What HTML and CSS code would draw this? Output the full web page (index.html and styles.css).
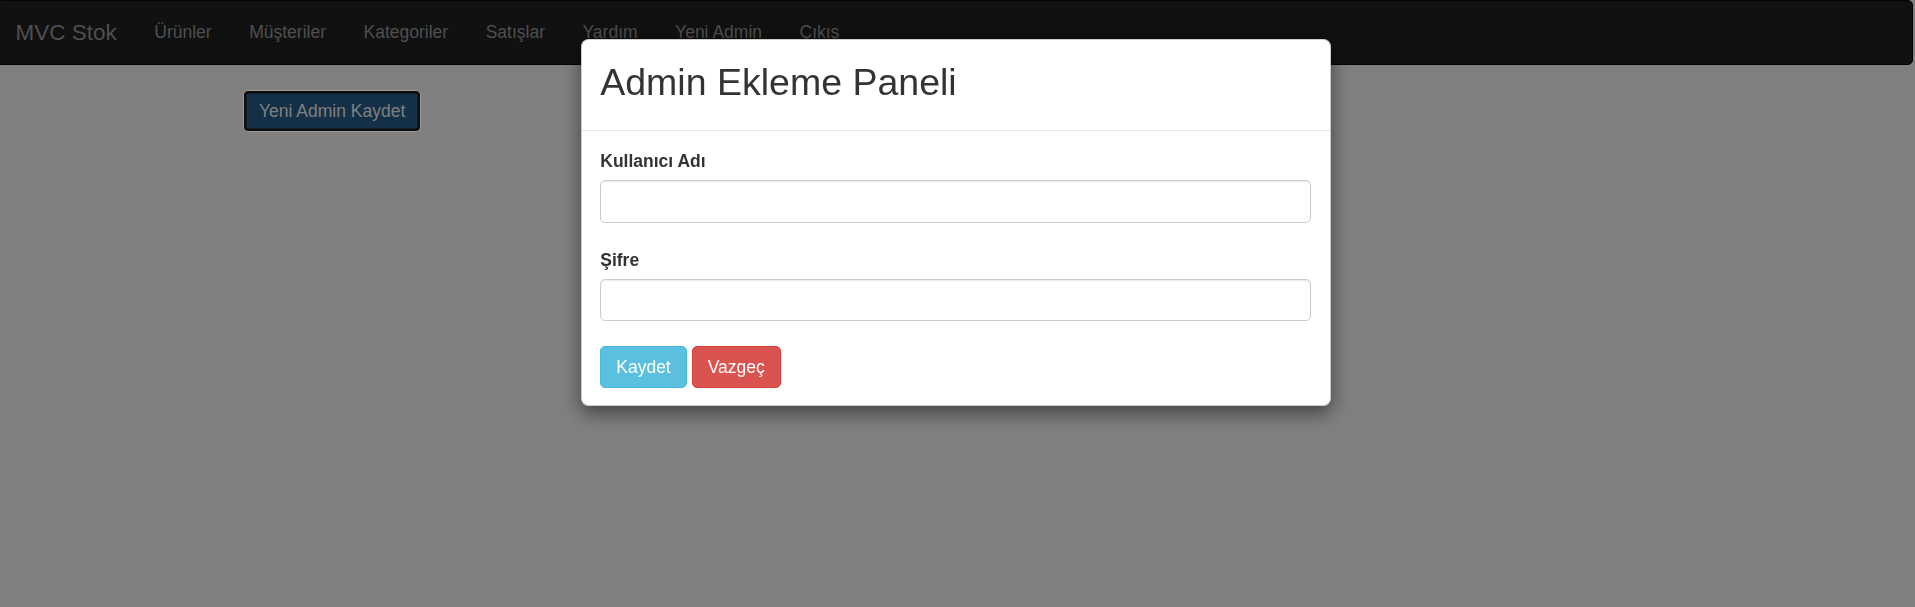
FILE: index.html
```html
<!DOCTYPE html>
<html lang="tr">
<head>
<meta charset="utf-8">
<title>Admin Ekleme</title>
<link rel="stylesheet" href="styles.css">
</head>
<body>
<nav class="navbar">
  <a class="brand" href="#">MVC Stok</a>
  <ul class="nav">
    <li><a href="#">Ürünler</a></li>
    <li><a href="#">Müşteriler</a></li>
    <li><a href="#">Kategoriler</a></li>
    <li><a href="#">Satışlar</a></li>
    <li><a href="#">Yardım</a></li>
    <li><a href="#">Yeni Admin</a></li>
    <li><a href="#">Çıkış</a></li>
  </ul>
</nav>
<main class="container">
  <button class="btn btn-primary is-focused" type="button">Yeni Admin Kaydet</button>
</main>
<div class="modal">
  <div class="modal-dialog">
    <div class="modal-content">
      <div class="modal-header">
        <h2 class="modal-title">Admin Ekleme Paneli</h2>
      </div>
      <div class="modal-body">
        <form class="admin-form">
          <div class="form-group">
            <label for="kadi">Kullanıcı Adı</label>
            <input id="kadi" class="form-control" type="text">
          </div>
          <div class="form-group">
            <label for="sifre">Şifre</label>
            <input id="sifre" class="form-control" type="password">
          </div>
          <div class="actions">
            <button class="btn btn-info" type="button">Kaydet</button>
            <button class="btn btn-danger" type="button">Vazgeç</button>
          </div>
        </form>
      </div>
    </div>
  </div>
</div>
</body>
</html>
```
FILE: styles.css
```css
* {
  box-sizing: border-box;
}

body {
  margin: 0;
  padding-right: 4px;
  background: #808080;
  font-family: "Liberation Sans", Arial, sans-serif;
  font-size: 17.5px;
  line-height: 25px;
  color: #333;
}

.navbar {
  display: flex;
  align-items: center;
  height: 65px;
  margin: 0 -2px 25px -4px;
  background: #111;
  border: 1.25px solid #040404;
  border-radius: 5px;
}

.brand {
  padding: 0 18.75px 0 18.5px;
  font-size: 22.5px;
  line-height: 25px;
  color: #4f4f4f;
  text-decoration: none;
}

.nav {
  display: flex;
  margin: 0;
  padding: 0;
  list-style: none;
}

.nav a {
  display: block;
  padding: 0 18.75px;
  color: #4f4f4f;
  text-decoration: none;
}

.container {
  width: 1462.5px;
  margin: 0 auto;
  padding: 0 18.75px;
}

/* buttons */
.btn {
  display: inline-block;
  padding: 7.5px 15px;
  font-family: inherit;
  font-size: 17.5px;
  line-height: 25px;
  border: 1.25px solid transparent;
  border-radius: 5px;
  cursor: pointer;
}

.btn-primary {
  background: #143048;
  border: 1px solid #9a9a9a;
  color: #808080;
  box-shadow: inset 0 0 0 2.5px #0e0e0e;
}

.btn-info {
  background: #5bc0de;
  border-color: #46b8da;
  color: #fff;
}

.btn-danger {
  background: #d9534f;
  border-color: #d43f3a;
  color: #fff;
}

/* modal */
.modal {
  position: fixed;
  inset: 0;
  padding-right: 4px;
}

.modal-dialog {
  width: 750px;
  margin: 39px auto;
}

.modal-content {
  background: #fff;
  border: 1.25px solid rgba(0, 0, 0, 0.2);
  border-radius: 7.5px;
  box-shadow: 0 6.25px 18.75px rgba(0, 0, 0, 0.5);
}

.modal-header {
  padding: 18.75px;
  border-bottom: 1.25px solid #e5e5e5;
}

.modal-title {
  margin: 0 0 6.25px;
  font-size: 37.5px;
  line-height: 46px;
  font-weight: normal;
  color: #333;
}

.modal-body {
  padding: 18px 18.75px 17px;
}

.form-group {
  margin-bottom: 25px;
}

.form-group label {
  display: block;
  margin-bottom: 6.25px;
  font-weight: bold;
}

.form-control {
  display: block;
  width: 100%;
  height: 42.5px;
  padding: 7.5px 15px;
  font-family: inherit;
  font-size: 17.5px;
  color: #555;
  background: #fff;
  border: 1.25px solid #ccc;
  border-radius: 5px;
  box-shadow: inset 0 1.25px 1.25px rgba(0, 0, 0, 0.075);
}

.actions {
  display: flex;
  gap: 5px;
}
```
